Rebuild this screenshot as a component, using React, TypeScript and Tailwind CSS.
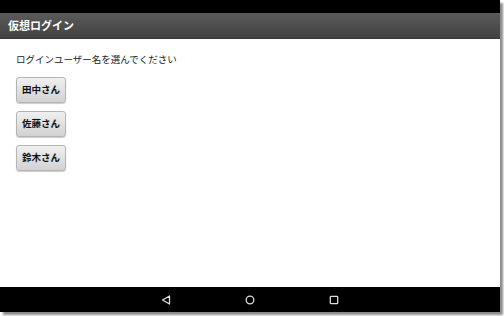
const jp = { fontFamily: '"Noto Sans CJK JP", "Noto Sans", sans-serif' };

function UserButton({ name }: { name: string }) {
  return (
    <button className="w-[50px] h-[26px] rounded-[3px] border border-[#b4b4b4] bg-gradient-to-b from-[#f0f0f0] to-[#d2d2d2] shadow-[0_1px_1px_rgba(0,0,0,0.2)] text-[9.5px] font-bold text-[#111] leading-none flex items-center justify-center">
      {name}
    </button>
  );
}

export default function App() {
  const users = ['田中さん', '佐藤さん', '鈴木さん'];

  return (
    <div className="w-[504px] h-[316px] bg-white" style={jp}>
      <div className="w-[500px] h-[312px] flex flex-col bg-white shadow-[3px_3px_2px_rgba(0,0,0,0.45)]">
        {/* status bar */}
        <div className="h-[13px] bg-black" />

        {/* action bar */}
        <div className="h-[26px] px-[8px] flex items-center bg-gradient-to-b from-[#5b5b5b] to-[#424242] border-b border-[#3a3a3a]">
          <span className="text-[11px] font-bold text-white leading-none">仮想ログイン</span>
        </div>

        {/* content */}
        <div className="flex-1 flex flex-col px-[16px] pt-[16px]">
          <p className="text-[9.5px] text-[#222] leading-none mb-[12px]">ログインユーザー名を選んでください</p>
          <div className="flex flex-col gap-[8px]">
            {users.map((u) => (
              <UserButton key={u} name={u} />
            ))}
          </div>
        </div>

        {/* nav bar */}
        <div className="h-[25px] bg-black flex items-center justify-center gap-[74px]">
          <svg width="10" height="10" viewBox="0 0 10 10">
            <path d="M8.5 1 L1.5 5 L8.5 9 Z" fill="none" stroke="#ddd" strokeWidth="1.3" strokeLinejoin="round" />
          </svg>
          <svg width="10" height="10" viewBox="0 0 10 10">
            <circle cx="5" cy="5" r="3.8" fill="none" stroke="#ddd" strokeWidth="1.3" />
          </svg>
          <svg width="10" height="10" viewBox="0 0 10 10">
            <rect x="1.3" y="1.3" width="7.4" height="7.4" rx="0.8" fill="none" stroke="#ddd" strokeWidth="1.3" />
          </svg>
        </div>
      </div>
    </div>
  );
}
